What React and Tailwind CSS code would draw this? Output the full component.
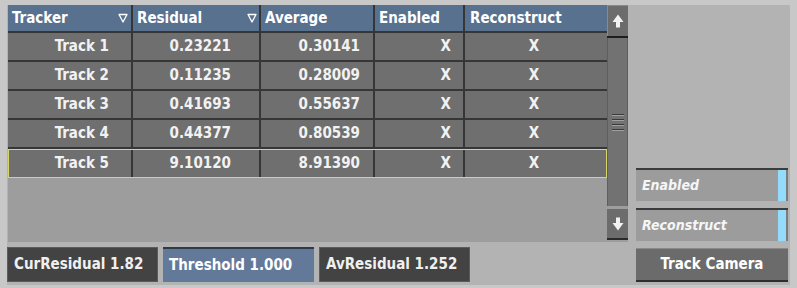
import React from 'react';

const font = "[font-family:'DejaVu_Sans_Condensed','DejaVu_Sans',sans-serif] [font-stretch:condensed]";

const rows = [
  { name: 'Track 1', residual: '0.23221', average: '0.30141' },
  { name: 'Track 2', residual: '0.11235', average: '0.28009' },
  { name: 'Track 3', residual: '0.41693', average: '0.55637' },
  { name: 'Track 4', residual: '0.44377', average: '0.80539' },
  { name: 'Track 5', residual: '9.10120', average: '8.91390', selected: true },
];

const SortMark = () => (
  <svg width="10" height="10" viewBox="0 0 10 10" className="shrink-0">
    <path d="M1 1.5 H9 L5 9 Z" fill="none" stroke="#ffffff" strokeWidth="1.3" strokeLinejoin="round" />
  </svg>
);

const ArrowUp = () => (
  <svg width="12" height="14" viewBox="0 0 12 14">
    <path d="M6 0.5 L11.5 8 H8 V13.5 H4 V8 H0.5 Z" fill="#f2f2f2" />
  </svg>
);

const ArrowDown = () => (
  <svg width="12" height="14" viewBox="0 0 12 14">
    <path d="M6 13.5 L11.5 6 H8 V0.5 H4 V6 H0.5 Z" fill="#f2f2f2" />
  </svg>
);

const ToggleField = ({ label }) => (
  <div className="h-[33px] flex bg-[#9c9c9c] border-t-2 border-[#3c3c3c]">
    <div className="flex-1 flex items-center pl-[6px] italic font-bold text-[14px] text-[#f6f6f6]">{label}</div>
    <div className="w-[8px] bg-[#93dcfb]" />
    <div className="w-[2px] bg-[#7c7c7c]" />
  </div>
);

export default function App() {
  return (
    <div className={`w-[797px] h-[288px] bg-[#c8c8c8] pt-[5px] pl-[7px] pr-[7px] pb-[3px] ${font}`}>
      <div className="h-full bg-[#b3b3b3] flex">
        {/* left: table + readouts */}
        <div className="w-[621px] flex flex-col">
          <div className="h-[237px] flex pl-[1px]">
            <div className="w-[599px] bg-[#9d9d9d]">
              {/* header */}
              <div className="h-[28px] flex bg-[#57718f] border-b-2 border-[#363636] text-white font-bold text-[15px]">
                <div className="w-[125px] border-r-2 border-[#363636] flex items-center justify-between pl-[4px] pr-[3px]">
                  <span>Tracker</span>
                  <SortMark />
                </div>
                <div className="w-[128px] border-r-2 border-[#363636] flex items-center justify-between pl-[4px] pr-[2px]">
                  <span>Residual</span>
                  <SortMark />
                </div>
                <div className="w-[114px] border-r-2 border-[#363636] flex items-center pl-[4px]">Average</div>
                <div className="w-[90px] border-r-2 border-[#363636] flex items-center pl-[4px]">Enabled</div>
                <div className="flex-1 flex items-center pl-[5px] rounded-tr-[3px]">Reconstruct</div>
              </div>
              {/* rows */}
              {rows.map((r) => (
                <div
                  key={r.name}
                  className={`h-[29px] flex bg-[#6f6f6f] text-[#f2f2f2] font-bold text-[15px] ${
                    r.selected ? 'outline outline-1 outline-[#d6d66a] -outline-offset-1 border-b-0' : 'border-b-2 border-[#363636]'
                  }`}
                >
                  <div className="w-[125px] border-r-2 border-[#363636] flex items-center justify-end pr-[22px]">{r.name}</div>
                  <div className="w-[128px] border-r-2 border-[#363636] flex items-center justify-end pr-[28px]">{r.residual}</div>
                  <div className="w-[114px] border-r-2 border-[#363636] flex items-center justify-end pr-[13px]">{r.average}</div>
                  <div className="w-[90px] border-r-2 border-[#363636] flex items-center justify-end pr-[12px]">X</div>
                  <div className="flex-1 flex items-center justify-center pr-[4px]">X</div>
                </div>
              ))}
            </div>
            {/* scrollbar */}
            <div className="w-[21px] flex flex-col">
              <div className="h-[31px] bg-[#6c6c6c] border-t border-l border-[#8a8a8a] flex items-center justify-center">
                <ArrowUp />
              </div>
              <div className="h-[2px] bg-[#1e1e1e]" />
              <div className="flex-1 bg-[#727272] border-x border-[#5e5e5e] flex items-center justify-center">
                <div className="flex flex-col gap-[3px] mt-[1px]">
                  <div className="w-[12px] h-[2px] border-t border-b border-t-[#3a3a3a] border-b-[#a0a0a0]" />
                  <div className="w-[12px] h-[2px] border-t border-b border-t-[#3a3a3a] border-b-[#a0a0a0]" />
                  <div className="w-[12px] h-[2px] border-t border-b border-t-[#3a3a3a] border-b-[#a0a0a0]" />
                  <div className="w-[12px] h-[2px] border-t border-b border-t-[#3a3a3a] border-b-[#a0a0a0]" />
                </div>
              </div>
              <div className="h-[3px] bg-[#9d9d9d]" />
              <div className="h-[31px] bg-[#6c6c6c] border-b-2 border-[#2a2a2a] flex items-center justify-center">
                <ArrowDown />
              </div>
              <div className="h-[2px] bg-[#9d9d9d]" />
            </div>
          </div>
          {/* readouts */}
          <div className="flex gap-[5px] mt-[5px] font-bold text-[15px]">
            <div className="w-[151px] h-[35px] bg-[#434343] border border-[#5c5c5c] flex items-center pl-[6px] text-[#f0f0f0]">CurResidual 1.82</div>
            <div className="w-[151px] h-[35px] bg-[#62799a] border-t-2 border-[#2e3a48] flex items-center pl-[6px] text-white">Threshold 1.000</div>
            <div className="w-[151px] h-[35px] bg-[#434343] border border-[#5c5c5c] flex items-center pl-[6px] text-[#f0f0f0]">AvResidual 1.252</div>
          </div>
        </div>
        {/* right column */}
        <div className="flex-1 flex flex-col justify-end pl-[8px] pr-[2px] pb-[3px]">
          <ToggleField label="Enabled" />
          <div className="h-[7px]" />
          <ToggleField label="Reconstruct" />
          <div className="h-[7px]" />
          <div className="h-[34px] bg-[#6b6b6b] border-t border-[#8a8a8a] border-b-2 border-b-[#2e2e2e] flex items-center justify-center text-white font-bold text-[15px]">
            Track Camera
          </div>
        </div>
      </div>
    </div>
  );
}
